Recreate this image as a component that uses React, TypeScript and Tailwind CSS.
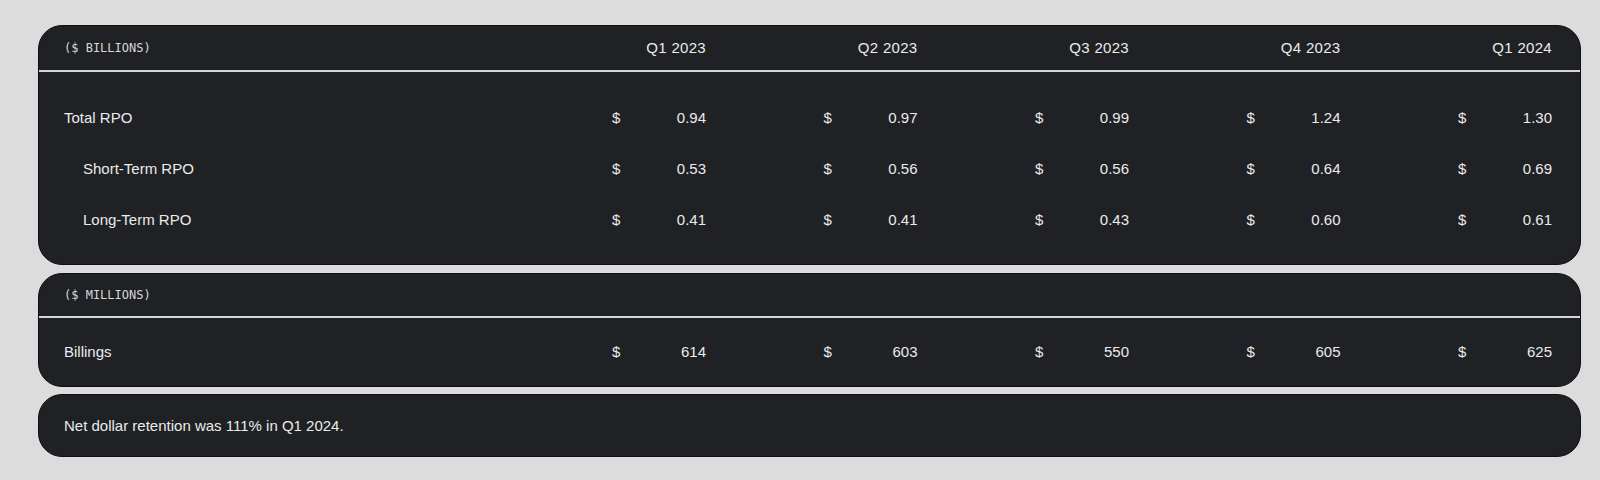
import React from "react";

const quarters = ["Q1 2023", "Q2 2023", "Q3 2023", "Q4 2023", "Q1 2024"];
const rpo = [
  { label: "Total RPO", indent: false, values: ["0.94", "0.97", "0.99", "1.24", "1.30"] },
  { label: "Short-Term RPO", indent: true, values: ["0.53", "0.56", "0.56", "0.64", "0.69"] },
  { label: "Long-Term RPO", indent: true, values: ["0.41", "0.41", "0.43", "0.60", "0.61"] },
];
const billings = ["614", "603", "550", "605", "625"];

const grid = "grid grid-cols-[1fr_repeat(5,211.5px)] items-center";
const sans = "font-['Liberation_Sans',Arial,sans-serif]";
const mono = "font-['DejaVu_Sans_Mono','Liberation_Mono',monospace]";

function ValueCell({ v }: { v: string }) {
  return (
    <div className="flex justify-between pl-[117.5px]">
      <span>$</span>
      <span>{v}</span>
    </div>
  );
}

export default function App() {
  return (
    <div className={`w-[1600px] h-[480px] bg-[#dcdcdc] pt-[25px] pl-[38px] pr-[19px] ${sans} text-[15px] text-[#ebebeb]`}>
      {/* Card 1 */}
      <div className="h-[240px] rounded-[24px] bg-[#1f2124] border border-[#0e0f10] overflow-hidden">
        <div className={`${grid} h-[44px] pl-[25px] pr-[28px]`}>
          <div className={`${mono} text-[12px] text-[#d8d8d8]`}>($ BILLIONS)</div>
          {quarters.map((q) => (
            <div key={q} className="text-right tracking-[0.3px]">{q}</div>
          ))}
        </div>
        <div className="h-[2px] bg-[#d6d6d6]" />
        <div className="pt-[21px] pb-[19px] pl-[25px] pr-[28px]">
          {rpo.map((r) => (
            <div key={r.label} className={`${grid} h-[51px]`}>
              <div className={r.indent ? "pl-[19px]" : ""}>{r.label}</div>
              {r.values.map((v, i) => (
                <ValueCell key={i} v={v} />
              ))}
            </div>
          ))}
        </div>
      </div>

      {/* Card 2 */}
      <div className="mt-[8px] h-[114px] rounded-[24px] bg-[#1f2124] border border-[#0e0f10] overflow-hidden">
        <div className="flex items-center h-[42px] pl-[25px]">
          <div className={`${mono} text-[12px] text-[#d8d8d8]`}>($ MILLIONS)</div>
        </div>
        <div className="h-[2px] bg-[#d6d6d6]" />
        <div className={`${grid} h-[68px] pl-[25px] pr-[28px]`}>
          <div>Billings</div>
          {billings.map((v, i) => (
            <ValueCell key={i} v={v} />
          ))}
        </div>
      </div>

      {/* Card 3 */}
      <div className="mt-[7px] h-[63px] rounded-[24px] bg-[#1f2124] border border-[#0e0f10] flex items-center pl-[25px] pt-[2px]">
        Net dollar retention was 111% in Q1 2024.
      </div>
    </div>
  );
}
